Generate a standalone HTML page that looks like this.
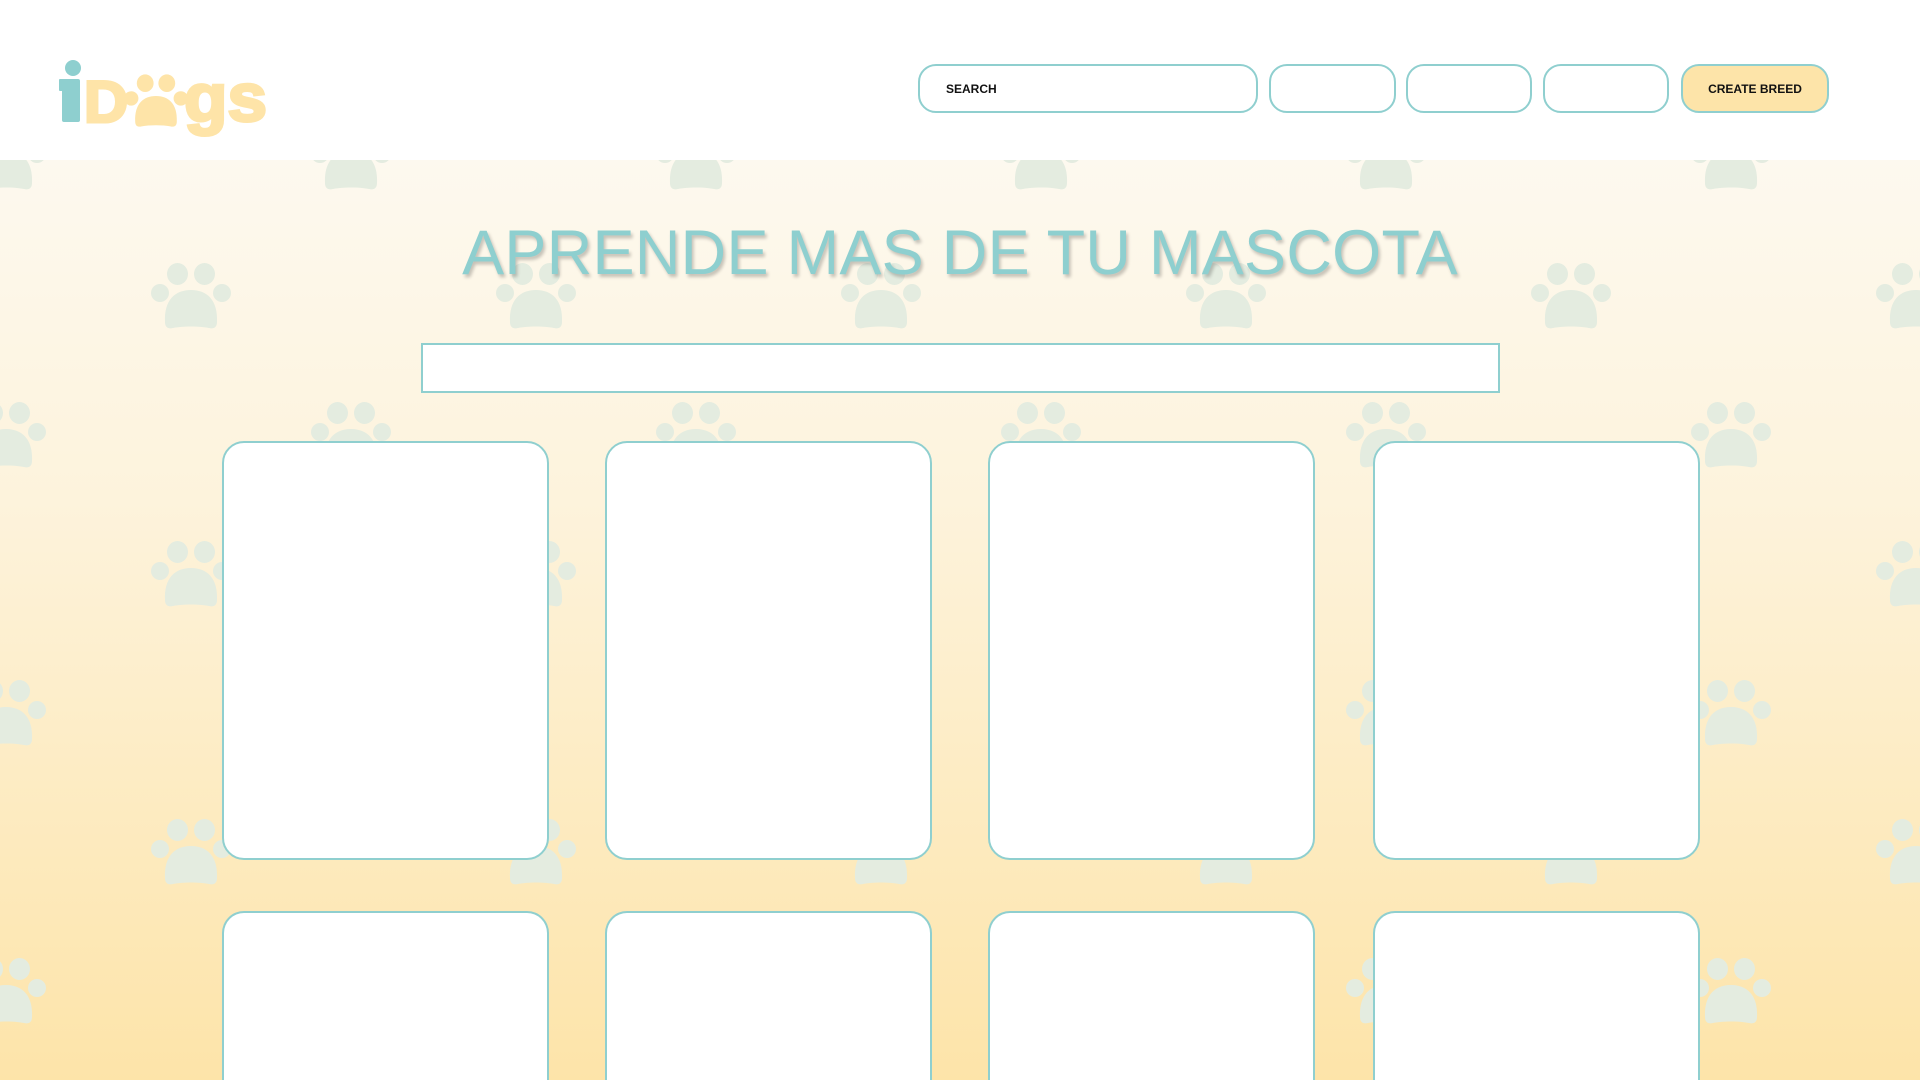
<!DOCTYPE html>
<html><head><meta charset="utf-8"><style>
*{margin:0;padding:0;box-sizing:border-box}
html,body{width:1920px;height:1080px;overflow:hidden}
body{font-family:"Liberation Sans",sans-serif}
#wrap{position:relative;width:1920px;height:1080px;overflow:hidden;background:linear-gradient(#fdf9ef 160px,#fdf3dc 500px,#fde4a9 1080px)}
#bg{position:absolute;left:0;top:0}
header{position:absolute;left:0;top:0;width:1920px;height:160px;background:#fff}
.btn{position:absolute;top:64px;height:49px;border:2px solid #8fcfcf;border-radius:18px;background:#fff;font-size:12px;font-weight:bold;color:#111;display:flex;align-items:center}
h1{position:absolute;left:0;width:1920px;top:217px;text-align:center;font-weight:normal;font-size:63px;color:#8ecfcf;text-shadow:2px 3px 3px rgba(0,0,0,.22);letter-spacing:0.3px}
.bar{position:absolute;left:421px;top:343px;width:1079px;height:50px;border:2px solid #8fcfcf;background:#fff}
.card{position:absolute;width:327px;height:419px;border:2px solid #8fcfcf;border-radius:22px;background:#fff}
.r2{height:169px;border-bottom:none;border-radius:22px 22px 0 0}
</style></head><body><div id="wrap">
<svg id="bg" width="1920" height="1080">
<defs>
<g id="paw" fill="#e4ece0">
<ellipse cx="-13.5" cy="-26" rx="10.5" ry="11"/><ellipse cx="13.5" cy="-26" rx="10.5" ry="11"/>
<ellipse cx="-31" cy="-7" rx="9" ry="9"/><ellipse cx="31" cy="-7" rx="9" ry="9"/>
<path d="M-26 22 C-27 0 -16 -10 0 -10 C16 -10 27 0 26 22 C26 28 22 29 18 28 C8 26 -8 26 -18 28 C-22 29 -26 28 -26 22Z"/>
</g>
<pattern id="pp" patternUnits="userSpaceOnUse" x="19" y="161" width="345" height="278">
<use href="#paw" x="172" y="139"/>
<use href="#paw" x="332" y="0"/><use href="#paw" x="332" y="278"/>
<use href="#paw" x="-13" y="0"/><use href="#paw" x="-13" y="278"/>
</pattern>
</defs>
<rect x="0" y="0" width="1920" height="1080" fill="url(#pp)"/>
</svg>
<header>
<svg width="300" height="160" style="position:absolute;left:0;top:0">
<circle cx="73" cy="68" r="8" fill="#8ecfcf"/>
<rect x="62" y="79" width="18" height="43" rx="2" fill="#8ecfcf"/>
<rect x="59" y="79" width="8" height="12" rx="1" fill="#8ecfcf"/>
<text x="84" y="122" font-family="Liberation Sans" font-weight="bold" font-size="58" fill="#fee4a8" stroke="#fee4a8" stroke-width="3" textLength="44" lengthAdjust="spacingAndGlyphs">D</text>
<g fill="#fee4a8" transform="translate(156,104) scale(0.8)">
<ellipse cx="-13.5" cy="-26" rx="10.5" ry="11"/><ellipse cx="13.5" cy="-26" rx="10.5" ry="11"/>
<ellipse cx="-31" cy="-7" rx="9" ry="9"/><ellipse cx="31" cy="-7" rx="9" ry="9"/>
<path d="M-26 22 C-27 0 -16 -10 0 -10 C16 -10 27 0 26 22 C26 28 22 29 18 28 C8 26 -8 26 -18 28 C-22 29 -26 28 -26 22Z"/>
</g>
<text x="184" y="121" font-family="Liberation Sans" font-weight="bold" font-size="68" fill="#fee4a8" stroke="#fee4a8" stroke-width="3" textLength="83" lengthAdjust="spacingAndGlyphs">gs</text>
</svg>
<div class="btn" style="left:918px;width:340px;padding-left:26px">SEARCH</div>
<div class="btn" style="left:1269px;width:127px"></div>
<div class="btn" style="left:1406px;width:126px"></div>
<div class="btn" style="left:1543px;width:126px"></div>
<div class="btn" style="left:1681px;width:148px;background:#fde4a9;justify-content:center">CREATE BREED</div>
</header>
<h1>APRENDE MAS DE TU MASCOTA</h1>
<div class="bar"></div>
<div class="card" style="left:222px;top:441px"></div>
<div class="card" style="left:605px;top:441px"></div>
<div class="card" style="left:988px;top:441px"></div>
<div class="card" style="left:1373px;top:441px"></div>
<div class="card r2" style="left:222px;top:911px"></div>
<div class="card r2" style="left:605px;top:911px"></div>
<div class="card r2" style="left:988px;top:911px"></div>
<div class="card r2" style="left:1373px;top:911px"></div>
</div></body></html>
